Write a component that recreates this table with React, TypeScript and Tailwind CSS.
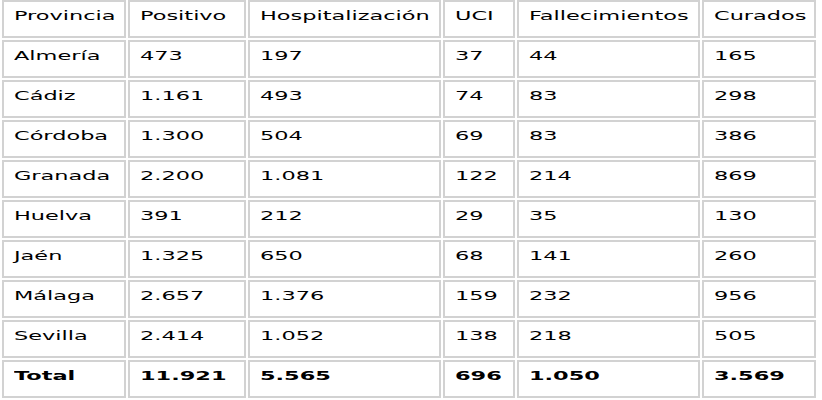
import React from 'react';

const headers = ['Provincia', 'Positivo', 'Hospitalización', 'UCI', 'Fallecimientos', 'Curados'];
const widths = ['w-[124px]', 'w-[118px]', 'w-[193px]', 'w-[72px]', 'w-[183px]', 'w-[114px]'];

const rows = [
  ['Almería', '473', '197', '37', '44', '165'],
  ['Cádiz', '1.161', '493', '74', '83', '298'],
  ['Córdoba', '1.300', '504', '69', '83', '386'],
  ['Granada', '2.200', '1.081', '122', '214', '869'],
  ['Huelva', '391', '212', '29', '35', '130'],
  ['Jaén', '1.325', '650', '68', '141', '260'],
  ['Málaga', '2.657', '1.376', '159', '232', '956'],
  ['Sevilla', '2.414', '1.052', '138', '218', '505'],
];

const total = ['Total', '11.921', '5.565', '696', '1.050', '3.569'];

const Cell = ({ text, bold, width }: { text: string; bold?: boolean; width?: string }) => (
  <td
    className={`h-[38px] border-2 border-[#d2d2d2] pl-[10px] pt-[3px] align-top leading-[20px] ${width ?? ''}`}
  >
    <span
      className={`inline-block origin-left scale-x-[1.78] whitespace-nowrap text-[12.6px] text-black ${bold ? 'font-bold' : 'font-normal'}`}
    >
      {text}
    </span>
  </td>
);

const App = () => {
  return (
    <div className="h-[400px] w-[822px] overflow-hidden bg-white font-['DejaVu_Sans',sans-serif]">
      <table className="-mt-[2px] table-fixed border-separate border-spacing-[2px]">
        <tbody>
          <tr>
            {headers.map((h, i) => (
              <Cell key={h} text={h} width={widths[i]} />
            ))}
          </tr>
          {rows.map((r) => (
            <tr key={r[0]}>
              {r.map((c, i) => (
                <Cell key={i} text={c} />
              ))}
            </tr>
          ))}
          <tr>
            {total.map((c, i) => (
              <Cell key={i} text={c} bold />
            ))}
          </tr>
        </tbody>
      </table>
    </div>
  );
};

export default App;
